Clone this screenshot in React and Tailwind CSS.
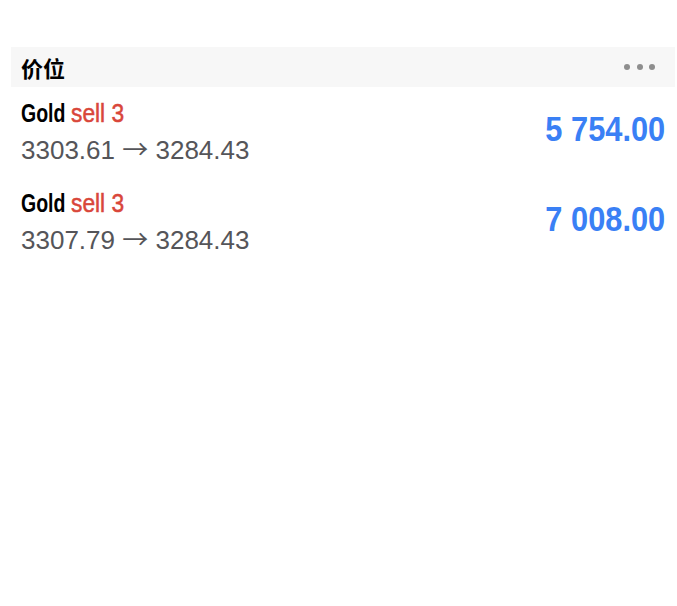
export default function App() {
  const rows = [
    { from: "3303.61", to: "3284.43", value: "5 754.00" },
    { from: "3307.79", to: "3284.43", value: "7 008.00" },
  ];
  const sans = { fontFamily: '"Liberation Sans", Arial, sans-serif' };
  return (
    <div className="w-[677px] h-[606px] bg-white pt-[47px]">
      <div className="ml-[11px] mr-[2px] h-[40px] bg-[#f7f7f7] flex items-center justify-between pl-[10px] pr-[20px]">
        <span className="text-[22px] font-bold text-black leading-none" style={{ fontFamily: '"Noto Sans CJK SC", sans-serif' }}>价位</span>
        <div className="flex gap-[6.5px]">
          <span className="w-[6px] h-[6px] rounded-full bg-[#8e8e8e]"></span>
          <span className="w-[6px] h-[6px] rounded-full bg-[#8e8e8e]"></span>
          <span className="w-[6px] h-[6px] rounded-full bg-[#8e8e8e]"></span>
        </div>
      </div>
      <div className="pl-[21px] pr-[12px]">
        {rows.map((r, i) => (
          <div key={i} className="h-[90px] pt-[11px] flex items-start justify-between">
            <div className="flex flex-col gap-[2px]">
              <div className="text-[25px] leading-[30px] whitespace-nowrap" style={sans}>
                <span className="inline-block origin-left scale-x-[0.78] text-black font-bold">Gold</span>
                <span className="inline-block origin-left scale-x-[0.91] -ml-[7px] text-[#d9463a] font-normal [-webkit-text-stroke:0.5px_#d9463a]">sell 3</span>
              </div>
              <div className="text-[26px] leading-[36px] text-[#555559]" style={sans}>
                {r.from} <span style={{ fontFamily: '"Noto Sans CJK SC", sans-serif' }}>→</span> {r.to}
              </div>
            </div>
            <div className="mt-[13px] text-[35px] font-bold text-[#3a80f5] leading-[36px] whitespace-nowrap" style={sans}>
              <span className="inline-block origin-right scale-x-[0.88]">{r.value}</span>
            </div>
          </div>
        ))}
      </div>
    </div>
  );
}
